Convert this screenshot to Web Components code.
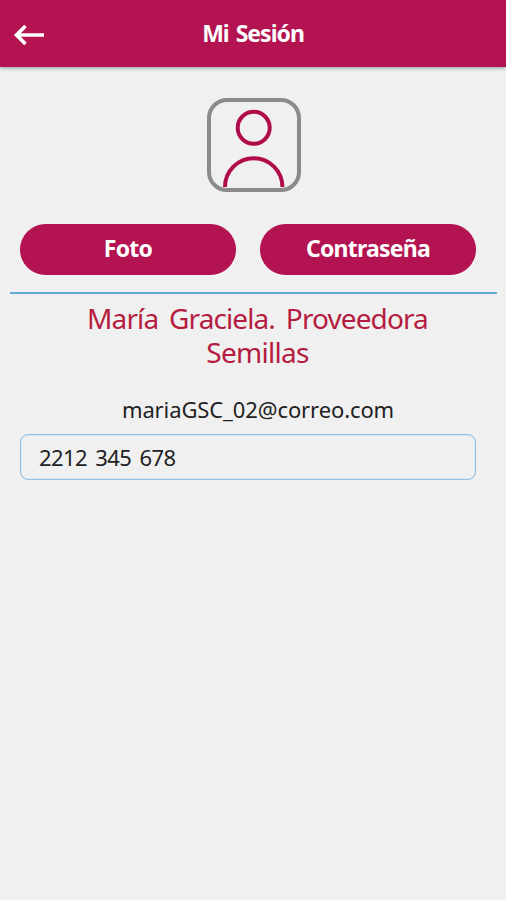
<!DOCTYPE html>
<html lang="es">
<head>
<meta charset="utf-8">
<title>Mi Sesión</title>
<style>
  body{
    margin: 0;
    background: #f0f0f0;
    font-family: "Trebuchet MS", "Noto Sans", sans-serif;
  }
</style>
</head>
<body>
<session-page></session-page>

<script>
const define = (name, html) => {
  const template = document.createElement('template');
  template.innerHTML = html;

  customElements.define(name, class extends HTMLElement {
    constructor() {
      super();
      this.attachShadow({ mode: 'open' }).appendChild(template.content.cloneNode(true));
    }
  });
};

define('app-bar', `
<style>
  :host{
    display: grid;
    grid-template-columns: 56px 1fr 56px;
    align-items: center;
    height: 67px;
    background: #b31451;
    color: #fff;
    box-shadow: 0 1px 4px rgba(70, 90, 100, 0.6);
  }

  svg{
    display: block;
    margin: 3px 0 0 13px;
  }

  h1{
    margin: 0 0 2px;
    font-size: 23px;
    line-height: 30px;
    font-weight: bold;
    letter-spacing: -1px;
    word-spacing: 2px;
    text-align: center;
    white-space: nowrap;
  }
</style>
<svg width="32" height="22" viewBox="0 0 32 22" fill="none" stroke="#fff" stroke-width="3.6">
  <path d="M31 11H3M12.5 2L3.5 11L12.5 20"/>
</svg>
<h1><slot></slot></h1>
`);

define('user-avatar', `
<style>
  :host{
    display: block;
    width: 94px;
    height: 94px;
  }

  svg{
    display: block;
  }
</style>
<svg width="94" height="94" viewBox="0 0 94 94" fill="none">
  <g stroke="#b00c49" stroke-width="4">
    <circle cx="46.7" cy="29.8" r="16"/>
    <path d="M18 89A28.7 28.7 0 0 1 75.4 89"/>
  </g>
  <rect x="2" y="2" width="90" height="90" rx="18" stroke="#8b8b8b" stroke-width="4"/>
</svg>
`);

define('pill-button', `
<style>
  :host{
    display: block;
  }

  button{
    display: block;
    width: 100%;
    height: 51px;
    padding: 0 0 2px;
    border: 0;
    border-radius: 26px;
    background: #b31451;
    color: #fff;
    font: bold 23px/49px "Trebuchet MS", "Noto Sans", sans-serif;
    letter-spacing: -0.75px;
  }
</style>
<button><slot></slot></button>
`);

define('text-field', `
<style>
  :host{
    display: block;
    box-sizing: border-box;
    height: 46px;
    padding: 0 18px;
    border: 1px solid #8fbfe2;
    border-radius: 8px;
    box-shadow: inset 0 0 0 1px #dbe8f1;
    color: #222;
    font-size: 22px;
    line-height: 44px;
    letter-spacing: -0.6px;
    word-spacing: 3.2px;
  }
</style>
<slot></slot>
`);

define('session-page', `
<style>
  :host{
    display: flex;
    flex-direction: column;
    min-height: 900px;
  }

  user-avatar{
    align-self: center;
    margin: 31px 0 32px 1px;
  }

  .actions{
    display: grid;
    grid-template-columns: 1fr 1fr;
    gap: 24px;
    margin: 0 30px 0 20px;
  }

  .line{
    height: 2px;
    margin: 17px 9px 0 10px;
    background: #65a9d7;
  }

  .name{
    margin: 7px 0 0 9px;
    color: #b51c40;
    font-size: 28px;
    line-height: 34px;
    letter-spacing: -0.9px;
    word-spacing: 4.5px;
    text-align: center;
  }

  .name div + div{
    letter-spacing: -0.7px;
  }

  .email{
    margin: 25px 0 0 10px;
    color: #222;
    font-size: 22px;
    line-height: 30px;
    letter-spacing: -0.1px;
    text-align: center;
  }

  text-field{
    margin: 10px 30px 0 20px;
  }
</style>
<app-bar>Mi Sesión</app-bar>
<user-avatar></user-avatar>
<div class="actions">
  <pill-button>Foto</pill-button>
  <pill-button>Contraseña</pill-button>
</div>
<div class="line"></div>
<div class="name">
  <div>María Graciela. Proveedora</div>
  <div>Semillas</div>
</div>
<div class="email">mariaGSC_02@correo.com</div>
<text-field>2212 345 678</text-field>
`);
</script>
</body>
</html>
